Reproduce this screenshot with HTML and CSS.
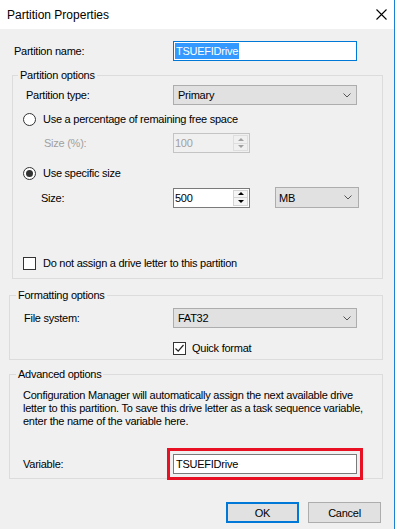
FILE: index.html
```html
<!DOCTYPE html>
<html>
<head>
<meta charset="utf-8">
<link rel="stylesheet" href="styles.css">
</head>
<body>
<div class="win">
  <div class="titlebar">
    <span class="title">Partition Properties</span>
    <svg class="close" width="11" height="11" viewBox="0 0 11 11"><path d="M0.5 0.5 L10.5 10.5 M10.5 0.5 L0.5 10.5" stroke="#000" stroke-width="1.1" fill="none"/></svg>
  </div>

  <div class="row r-name">
    <span class="lbl l-name">Partition name:</span>
    <div class="tb focus w-wide"><span class="sel">TSUEFIDrive</span></div>
  </div>

  <fieldset class="grp g1">
    <legend>Partition options</legend>
    <div class="row r-type">
      <span class="lbl l-g1" style="padding-left:13px">Partition type:</span>
      <div class="dd w-wide"><span class="dd-text">Primary</span><svg class="chev" width="8" height="5" viewBox="0 0 8 5"><path d="M0.5 0.5 L4 4 L7.5 0.5" stroke="#555" fill="none"/></svg></div>
    </div>
    <div class="row r-radio1">
      <span class="radio"></span><span class="opt">Use a percentage of remaining free space</span>
    </div>
    <div class="row r-pct">
      <span class="lbl l-g1 dis" style="padding-left:31px">Size (%):</span>
      <div class="spin disabled"><span class="val">100</span><span class="btns"><span class="sb"><i class="up"></i></span><span class="sb"><i class="down"></i></span></span></div>
    </div>
    <div class="row r-radio2">
      <span class="radio on"></span><span class="opt">Use specific size</span>
    </div>
    <div class="row r-size">
      <span class="lbl l-g1" style="padding-left:28px">Size:</span>
      <div class="spin"><span class="val">500</span><span class="btns"><span class="sb"><i class="up"></i></span><span class="sb"><i class="down"></i></span></span></div>
      <div class="dd w-unit"><span class="dd-text">MB</span><svg class="chev" width="8" height="5" viewBox="0 0 8 5"><path d="M0.5 0.5 L4 4 L7.5 0.5" stroke="#555" fill="none"/></svg></div>
    </div>
    <div class="row r-noletter">
      <span class="check"></span><span class="opt">Do not assign a drive letter to this partition</span>
    </div>
  </fieldset>

  <fieldset class="grp g2">
    <legend>Formatting options</legend>
    <div class="row r-fs">
      <span class="lbl l-g2" style="padding-left:14px">File system:</span>
      <div class="dd w-wide"><span class="dd-text">FAT32</span><svg class="chev" width="8" height="5" viewBox="0 0 8 5"><path d="M0.5 0.5 L4 4 L7.5 0.5" stroke="#555" fill="none"/></svg></div>
    </div>
    <div class="row r-quick">
      <span class="check on"><svg width="11" height="11" viewBox="0 0 11 11"><path d="M1.5 5.5 L4.2 8.2 L9.5 2" stroke="#222" stroke-width="1.2" fill="none"/></svg></span><span class="opt q">Quick format</span>
    </div>
  </fieldset>

  <fieldset class="grp g3">
    <legend>Advanced options</legend>
    <p class="desc">Configuration Manager will automatically assign the next available drive<br>letter to this partition. To save this drive letter as a task sequence variable,<br>enter the name of the variable here.</p>
    <div class="row r-var">
      <span class="lbl l-g2" style="padding-left:13px">Variable:</span>
      <div class="tb plain w-wide marked"><span class="tbtext">TSUEFIDrive</span></div>
    </div>
  </fieldset>

  <div class="buttons">
    <button class="btn default">OK</button>
    <button class="btn">Cancel</button>
  </div>
</div>
</body>
</html>
```

FILE: styles.css
```css
html, body {
  margin: 0;
  padding: 0;
}
body {
  background: #ffffff;
  width: 399px;
  height: 529px;
  overflow: hidden;
  font-family: "Liberation Sans", Arial, sans-serif;
  font-size: 11px;
  letter-spacing: -0.25px;
  color: #000;
}
.win {
  box-sizing: border-box;
  width: 395px;
  height: 529px;
  background: #f0f0f0;
  border-right: 1px solid #1b7fd3;
  display: flex;
  flex-direction: column;
}
.titlebar {
  height: 29px;
  flex: none;
  background: #fff;
  display: flex;
  align-items: center;
  padding-left: 7px;
}
.title {
  font-size: 12px;
  letter-spacing: 0;
}
.close {
  margin-left: auto;
  margin-right: 7px;
}
.row {
  display: flex;
  align-items: center;
  flex: none;
}
.lbl {
  flex: none;
  box-sizing: border-box;
  white-space: nowrap;
}
.l-name { width: 173px; padding-left: 14px; }
.l-g1 { width: 160px; }
.l-g2 { width: 163px; }
.dis { color: #a0a0a0; }

.r-name { margin-top: 12px; height: 20px; }

/* text boxes */
.tb {
  box-sizing: border-box;
  height: 20px;
  background: #fff;
  border: 1px solid #7a7a7a;
  display: flex;
  align-items: center;
  padding-left: 1px;
}
.tb.focus { border-color: #0078d7; }
.w-wide { width: 184px; }
.sel {
  background: #3399ff;
  color: #fff;
  line-height: 16px;
  padding: 0 1px;
}
.tbtext { padding-left: 1px; }
.marked {
  outline: 3px solid #e81123;
  outline-offset: 3px;
}

/* group boxes */
.grp {
  margin: 0;
  padding: 0;
  border: 1px solid #dcdcdc;
  min-width: 0;
  flex: none;
  box-sizing: border-box;
}
.grp legend {
  padding: 0 2px;
  margin-left: 6px;
  line-height: 14px;
  font-size: 11px;
}
.g1 { margin: 7px 0 0 12px; width: 371px; padding-bottom: 7px; }
.g1 legend { margin-left: 5px; }
.g2 { margin: 9px 0 0 9px; width: 374px; padding-bottom: 3px; }
.g3 { margin: 7px 0 0 9px; width: 374px; padding-bottom: 4px; }

/* dropdowns */
.dd {
  box-sizing: border-box;
  height: 20px;
  background: #e1e1e1;
  border: 1px solid #adadad;
  display: flex;
  align-items: center;
  padding-left: 4px;
}
.dd-text { flex: 1; }
.chev { margin-right: 5px; flex: none; }
.w-unit { width: 84px; height: 21px; margin-left: 25px; padding-left: 3px; }
.w-unit .chev { margin-right: 6px; }

/* radios / checks */
.radio, .check {
  box-sizing: border-box;
  width: 13px;
  height: 13px;
  background: #fff;
  border: 1px solid #333;
  flex: none;
  margin-left: 10px;
  margin-right: 7px;
  display: flex;
  align-items: center;
  justify-content: center;
}
.radio { border-radius: 50%; }
.radio.on::after {
  content: "";
  width: 7px;
  height: 7px;
  border-radius: 50%;
  background: #333;
}
.opt { white-space: nowrap; }

.r-type { margin-top: 3px; height: 20px; }
.r-radio1 { margin-top: 6px; height: 16px; }
.r-pct { margin-top: 6px; height: 20px; }
.r-radio2 { margin-top: 12px; height: 16px; }
.r-size { margin-top: 6px; height: 21px; }
.r-noletter { margin-top: 47px; height: 16px; }

/* spin boxes */
.spin {
  box-sizing: border-box;
  width: 77px;
  height: 20px;
  background: #fff;
  border: 1px solid #7a7a7a;
  display: flex;
}
.spin .val {
  flex: 1;
  padding-left: 1px;
  line-height: 18px;
}
.spin.disabled {
  background: #f0f0f0;
  border-color: #c4c4c4;
  color: #a0a0a0;
}
.btns {
  width: 15px;
  display: flex;
  flex-direction: column;
  margin: 1px 1px 1px 0;
}
.sb {
  flex: 1;
  box-sizing: border-box;
  border: 1px solid #d4d4d4;
  background: #f5f5f5;
  display: flex;
  align-items: center;
  justify-content: center;
}
.sb + .sb { border-top: none; }
.sb i {
  width: 0;
  height: 0;
  border-left: 3px solid transparent;
  border-right: 3px solid transparent;
}
.sb i.up { border-bottom: 3px solid #000; }
.sb i.down { border-top: 3px solid #000; }
.disabled .sb i.up { border-bottom-color: #a0a0a0; }
.disabled .sb i.down { border-top-color: #a0a0a0; }
.disabled .sb { border-color: #dedede; background: #f0f0f0; }

/* formatting */
.r-fs { margin-top: 6px; height: 20px; }
.r-quick { margin-top: 12px; height: 16px; }
.r-quick .check { margin-left: 163px; margin-right: 6px; }

/* advanced */
.desc {
  margin: 8px 0 0 13px;
  line-height: 13px;
  white-space: nowrap;
}
.r-var { margin-top: 26px; height: 20px; }

/* buttons */
.buttons {
  display: flex;
  justify-content: flex-end;
  gap: 9px;
  margin-top: 23px;
  padding-right: 13px;
}
.btn {
  box-sizing: border-box;
  width: 73px;
  height: 21px;
  background: #e1e1e1;
  border: 1px solid #adadad;
  font-family: "Liberation Sans", Arial, sans-serif;
  font-size: 11px;
  letter-spacing: -0.25px;
  color: #000;
  padding: 0;
  margin: 0;
}
.btn.default { border: 2px solid #0078d7; }
```
